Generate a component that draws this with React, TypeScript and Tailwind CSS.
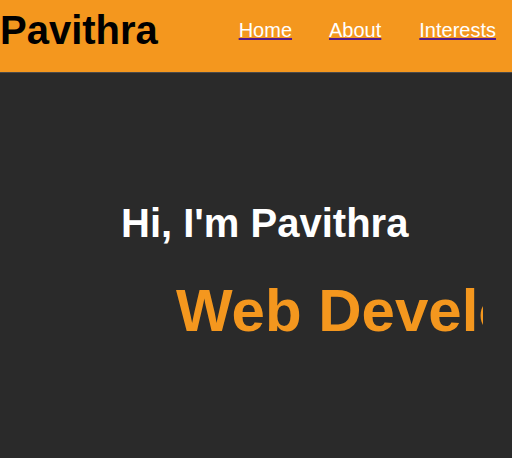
import React from 'react';

const links = ['Home', 'About', 'Interests'];

const App = () => {
  return (
    <div className="min-h-[458px] bg-[#2a2a2a] font-['Liberation_Sans',Arial,sans-serif]">
      <header className="h-[73px] bg-[#f4971e] border-b border-[#4a4a4a] flex justify-between">
        <h1 className="pt-[10px] text-[40px] leading-[40px] font-bold text-black">Pavithra</h1>
        <nav className="pt-[20px] pr-4 flex">
          {links.map((link, index) => (
            <a
              key={link}
              href="#"
              className={`text-[20px] leading-[20px] text-white underline decoration-[#551a8b] ${
                index === 0 ? '' : index === 1 ? 'ml-[37px]' : 'ml-[38px]'
              }`}
            >
              {link}
            </a>
          ))}
        </nav>
      </header>

      <section className="pt-[130px]">
        <h2 className="pl-[121px] text-[40px] leading-[40px] font-bold text-white">Hi, I'm Pavithra</h2>
        <div className="mt-[38px] ml-[176px] w-[307px] overflow-hidden whitespace-nowrap">
          <span className="text-[60px] leading-[60px] font-bold text-[#f4971e]">Web Developer</span>
        </div>
      </section>
    </div>
  );
};

export default App;
